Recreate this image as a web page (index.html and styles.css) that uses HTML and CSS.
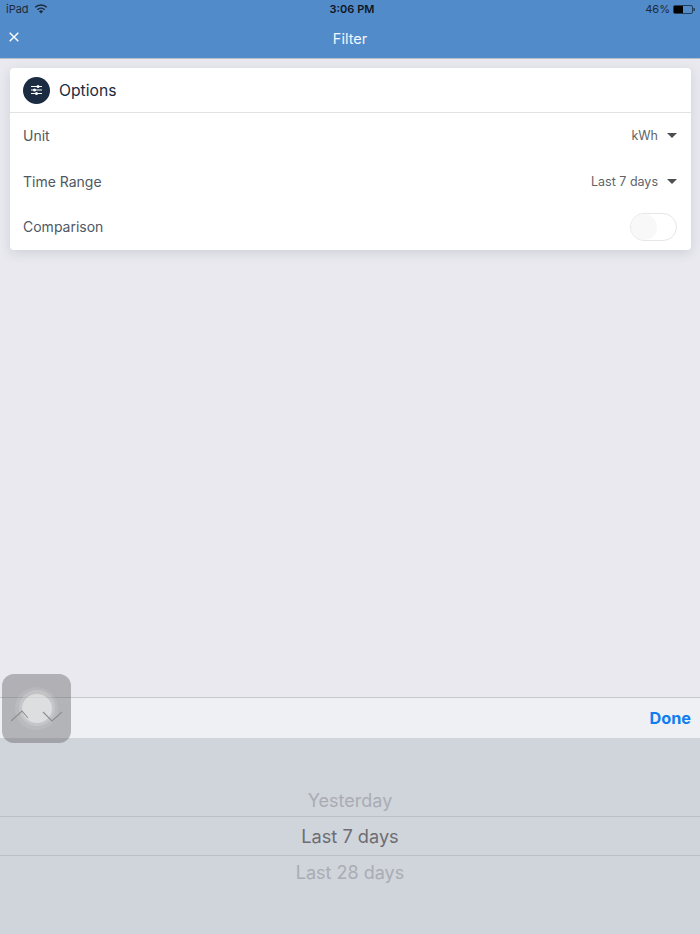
FILE: index.html
```html
<!DOCTYPE html>
<html lang="en">
<head>
<meta charset="utf-8">
<title>Filter</title>
<link rel="stylesheet" href="styles.css">
</head>
<body>
<div class="app">
  <header class="topbar">
    <div class="status">
      <div class="status-left">
        <span>iPad</span>
        <svg class="wifi" width="14" height="10" viewBox="0 0 14 10"><path d="M7 9.6 4.9 7.3a3 3 0 0 1 4.2 0z" fill="#1c2a3a"/><path d="M3.4 5.7a5.2 5.2 0 0 1 7.2 0M1.2 3.3a8.3 8.3 0 0 1 11.6 0" fill="none" stroke="#1c2a3a" stroke-width="1.5"/></svg>
      </div>
      <div class="status-time">3:06 PM</div>
      <div class="status-right">
        <span>46%</span>
        <svg class="battery" width="22" height="9" viewBox="0 0 22 9"><rect x=".5" y=".5" width="19" height="8" rx="1.5" fill="none" stroke="#1c2a3a" stroke-width=".8"/><rect x="1" y="1" width="9" height="7" fill="#000"/><rect x="20.5" y="3" width="1.2" height="3" fill="#1c2a3a"/></svg>
      </div>
    </div>
    <div class="navbar">
      <svg class="close" width="10" height="10" viewBox="0 0 10 10"><path d="M.7.7l8.6 8.6M9.3.7.7 9.3" stroke="#fff" stroke-width="1.4" fill="none"/></svg>
      <div class="nav-title">Filter</div>
    </div>
  </header>

  <main class="content">
    <section class="card">
      <div class="card-head">
        <span class="badge">
          <svg width="11" height="10" viewBox="0 0 11 10"><path d="M0 1.500h11M0 5h11M0 8.500h11" stroke="#fff" stroke-width="1.100" fill="none"/><circle cx="7" cy="1.500" r="1.500" fill="#fff"/><circle cx="3.500" cy="5" r="1.500" fill="#fff"/><circle cx="5.500" cy="8.500" r="1.500" fill="#fff"/></svg>
        </span>
        <h2 class="card-title">Options</h2>
      </div>
      <div class="row">
        <span class="row-label">Unit</span>
        <span class="row-value">kWh<i class="caret"></i></span>
      </div>
      <div class="row">
        <span class="row-label">Time Range</span>
        <span class="row-value">Last 7 days<i class="caret"></i></span>
      </div>
      <div class="row">
        <span class="row-label">Comparison</span>
        <span class="toggle"><i class="knob"></i></span>
      </div>
    </section>
  </main>

  <div class="toolbar"><span class="done">Done</span></div>
  <div class="picker">
    <div class="pick pick-far pick-up">Yesterday</div>
    <div class="pick pick-now">Last 7 days</div>
    <div class="pick pick-far pick-down">Last 28 days</div>
  </div>

  <div class="assistive">
    <span class="ring ring-outer"></span>
    <span class="ring ring-mid"></span>
    <span class="ring ring-inner"></span>
    <svg class="chevrons" width="52" height="18" viewBox="0 0 52 18"><path d="M0 17 11 7l6 7M32 8l9 9 10-9" fill="none" stroke="#8d8d90" stroke-width="1.100"/></svg>
  </div>
</div>
</body>
</html>
```

FILE: styles.css
```css
* { box-sizing: border-box; }
html, body { margin: 0; padding: 0; }
body { font-family: Inter, "Liberation Sans", sans-serif; background: #e9e9ef; }
.app { position: relative; width: 700px; height: 934px; overflow: hidden; display: flex; flex-direction: column; }

.topbar { height: 59px; background: #528bca; border-bottom: 1px solid #b4bfcc; flex: none; }
.status { height: 18px; display: grid; grid-template-columns: 1fr auto 1fr; align-items: center; padding: 0 5px 0 6px; font-size: 11px; color: #1c2a3a; }
.status-left { display: flex; align-items: center; gap: 5px; }
.status-time { font-weight: 600; color: #10161f; margin-left: 3px; }
.status-right { display: flex; justify-content: flex-end; align-items: center; gap: 3px; }
.navbar { position: relative; height: 40px; display: flex; align-items: center; justify-content: center; }
.close { position: absolute; left: 9px; top: 14px; }
.nav-title { color: #f2f6fb; font-size: 14.500px; margin-top: 1px; }

.content { flex: 1; padding: 9px 9px 0 10px; }
.card { background: #fff; border-radius: 4px; box-shadow: 0 3px 12px rgba(60, 60, 90, .14); }
.card-head { height: 45px; display: flex; align-items: center; gap: 9px; padding: 0 13px; border-bottom: 1px solid #e2e2e6; }
.badge { width: 27px; height: 27px; border-radius: 50%; background: #1b2b41; display: flex; align-items: center; justify-content: center; }
.card-title { margin: 0; font-size: 15.700px; font-weight: 400; color: #1b2b41; }
.row { height: 45.500px; display: flex; align-items: center; justify-content: space-between; padding: 0 14px 0 13px; }
.row-label { font-size: 14px; color: #4f5863; }
.row-value { display: flex; align-items: center; font-size: 12.500px; color: #5e6469; }
.caret { width: 0; height: 0; margin-left: 9px; border-left: 5px solid transparent; border-right: 5px solid transparent; border-top: 5px solid #4c4f52; }
.toggle { width: 47px; height: 28px; border-radius: 14px; border: 1px solid #e6e6e8; background: #fff; padding: 0; display: block; }
.knob { display: block; width: 26px; height: 26px; border-radius: 50%; background: #f8f8f9; }

.toolbar { height: 41px; flex: none; background: #eff0f3; border-top: 1px solid #c9c8cd; display: flex; align-items: center; justify-content: flex-end; padding: 0 9px; }
.done { color: #0f7cf0; font-size: 16.300px; font-weight: 700; }

.picker { height: 196px; flex: none; background: #d0d4db; display: flex; flex-direction: column; padding-top: 42px; align-items: stretch; text-align: center; }
.pick { display: flex; align-items: center; justify-content: center; }
.pick-far { color: #a9adb3; font-size: 18px; }
.pick-up { height: 36px; padding-top: 4px; }
.pick-down { height: 32px; }
.pick-now { height: 40px; color: #6c6e73; font-size: 18.200px; border-top: 1px solid #bcc0c7; border-bottom: 1px solid #bcc0c7; }

.assistive { position: absolute; left: 2px; top: 674px; width: 69px; height: 69px; border-radius: 12px; background: rgba(90, 90, 95, .4); }
.ring { position: absolute; border-radius: 50%; }
.ring-outer { left: 13px; top: 13px; width: 43px; height: 43px; background: rgba(255, 255, 255, .1); }
.ring-mid { left: 17px; top: 16px; width: 36px; height: 36px; background: rgba(255, 255, 255, .16); }
.ring-inner { left: 20px; top: 20px; width: 30px; height: 29px; background: rgba(255, 255, 255, .42); }
.chevrons { position: absolute; left: 9px; top: 30px; }
```
